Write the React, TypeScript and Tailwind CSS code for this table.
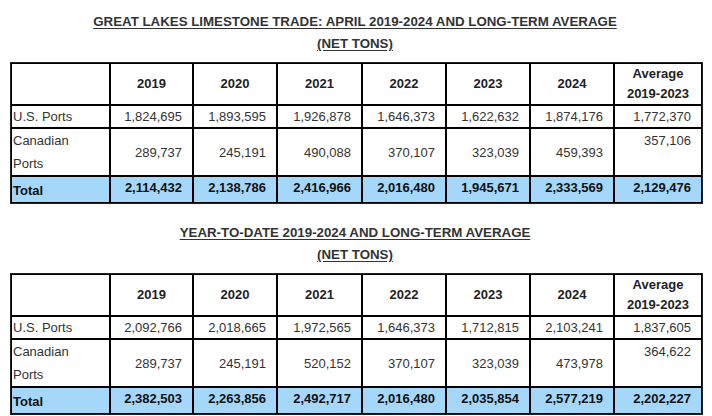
const years = ['2019', '2020', '2021', '2022', '2023', '2024'];

interface TradeTable {
  title: string;
  us: string[];
  canada: string[];
  total: string[];
}

const tables: TradeTable[] = [
  {
    title: 'GREAT LAKES LIMESTONE TRADE: APRIL 2019-2024 AND LONG-TERM AVERAGE',
    us: ['1,824,695', '1,893,595', '1,926,878', '1,646,373', '1,622,632', '1,874,176', '1,772,370'],
    canada: ['289,737', '245,191', '490,088', '370,107', '323,039', '459,393', '357,106'],
    total: ['2,114,432', '2,138,786', '2,416,966', '2,016,480', '1,945,671', '2,333,569', '2,129,476'],
  },
  {
    title: 'YEAR-TO-DATE 2019-2024 AND LONG-TERM AVERAGE',
    us: ['2,092,766', '2,018,665', '1,972,565', '1,646,373', '1,712,815', '2,103,241', '1,837,605'],
    canada: ['289,737', '245,191', '520,152', '370,107', '323,039', '473,978', '364,622'],
    total: ['2,382,503', '2,263,856', '2,492,717', '2,016,480', '2,035,854', '2,577,219', '2,202,227'],
  },
];

const colWidths = ['w-[99px]', 'w-[83px]', 'w-[84px]', 'w-[85px]', 'w-[84px]', 'w-[84px]', 'w-[84px]', 'w-[88px]'];

const cell = 'border border-black p-0';

function Trade({ data, first }: { data: TradeTable; first: boolean }) {
  return (
    <section className={`w-[693px] ${first ? 'pt-[11px]' : 'pt-[18px]'}`}>
      {/* Heading */}
      <div className="pr-[3px] text-center text-[13.3px] leading-[22px] font-bold text-[#333] underline underline-offset-2">
        <p>{data.title}</p>
        <p>(NET TONS)</p>
      </div>

      <table className="mt-[7px] w-[693px] table-fixed border-separate border-spacing-0 border border-[#222] text-[13px] text-[#333]">
        <tbody>
          <tr className="h-[42px]">
            <td className={`${cell} ${colWidths[0]}`}></td>
            {years.map((y, i) => (
              <td key={y} className={`${cell} ${colWidths[i + 1]} text-center font-bold text-[#222]`}>
                {y}
              </td>
            ))}
            <td className={`${cell} ${colWidths[7]} text-center font-bold leading-[20px] text-[#222]`}>
              Average
              <br />
              2019-2023
            </td>
          </tr>

          <tr className="h-[23px]">
            <td className={`${cell} pl-px`}>U.S. Ports</td>
            {data.us.map((v, i) => (
              <td key={i} className={`${cell} pr-[10px] text-right`}>
                {v}
              </td>
            ))}
          </tr>

          <tr className="h-[47px] leading-[23px]">
            <td className={`${cell} pl-px`}>
              Canadian
              <br />
              Ports
            </td>
            {data.canada.map((v, i) => (
              <td
                key={i}
                className={`${cell} pr-[10px] text-right ${i === 6 ? 'align-top' : 'align-middle'}`}
              >
                {v}
              </td>
            ))}
          </tr>

          <tr className="h-[27px] bg-[#a4d7f9] font-bold text-[#111]">
            <td className={`${cell} pl-px pt-[3px]`}>Total</td>
            {data.total.map((v, i) => (
              <td key={i} className={`${cell} pr-[10px] pb-[3px] text-right`}>
                {v}
              </td>
            ))}
          </tr>
        </tbody>
      </table>
    </section>
  );
}

export default function App() {
  return (
    <div className="h-[416px] w-[712px] bg-white pl-[10px] font-['Liberation_Sans',Arial,sans-serif]">
      {tables.map((t, i) => (
        <Trade key={t.title} data={t} first={i === 0} />
      ))}
    </div>
  );
}
